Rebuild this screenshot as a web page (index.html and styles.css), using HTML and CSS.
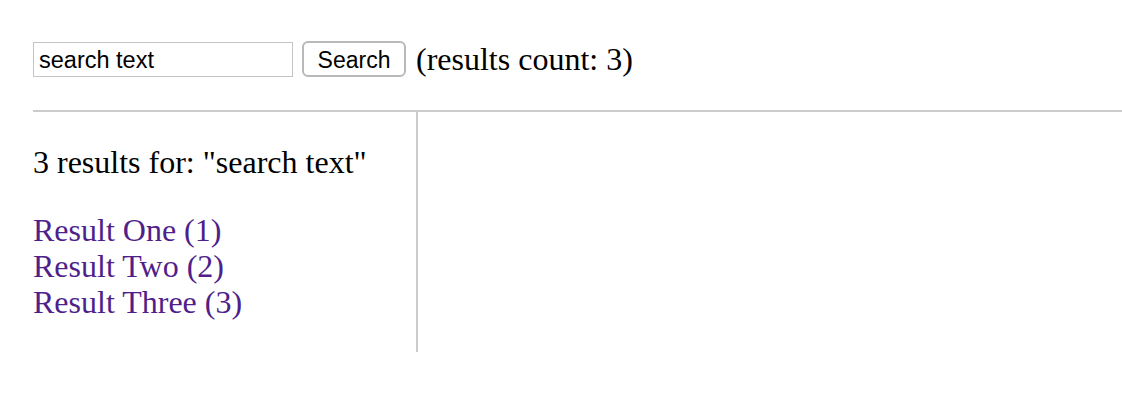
FILE: index.html
```html
<!DOCTYPE html>
<html>
<head>
<meta charset="utf-8">
<link rel="stylesheet" href="styles.css">
</head>
<body>
<div class="page">
  <form class="search-bar">
    <input class="search-input" type="text" value="search text">
    <button class="search-btn" type="button">Search</button>
    <span class="count">(results count: 3)</span>
  </form>
  <div class="divider"></div>
  <div class="main">
    <div class="results">
      <p class="summary">3 results for: "search text"</p>
      <ul class="list">
        <li><a href="#" class="link">Result One (1)</a></li>
        <li><a href="#" class="link">Result Two (2)</a></li>
        <li><a href="#" class="link">Result Three (3)</a></li>
      </ul>
    </div>
    <div class="detail"></div>
  </div>
</div>
</body>
</html>
```
FILE: styles.css
```css
html, body {
  margin: 0;
  padding: 0;
  background: #fff;
}
.page {
  padding: 41px 0 0 33px;
  font-family: "Liberation Serif", "Times New Roman", serif;
  font-size: 32px;
  color: #000;
}
.search-bar {
  display: flex;
  align-items: center;
  height: 36px;
  margin: 0;
}
.search-input {
  box-sizing: border-box;
  width: 260px;
  height: 35px;
  border: 1px solid #c4c4c4;
  padding: 2px 5px 0 5px;
  font-family: "Liberation Sans", Arial, sans-serif;
  font-size: 23.5px;
  color: #000;
  outline: none;
}
.search-btn {
  box-sizing: border-box;
  margin-left: 9px;
  width: 104px;
  height: 36px;
  border: 2px solid #b9b9b9;
  border-radius: 6px;
  background: #fff;
  font-family: "Liberation Sans", Arial, sans-serif;
  font-size: 23px;
  color: #000;
  padding: 2px 0 0 0;
}
.count {
  margin-left: 10px;
  line-height: 36px;
}
.divider {
  margin-top: 33px;
  height: 2px;
  background: #cccccc;
}
.main {
  display: flex;
}
.results {
  width: 383px;
  height: 240px;
  border-right: 2px solid #cccccc;
}
.summary {
  margin: 32px 0 0 0;
  line-height: 36px;
}
.list {
  list-style: none;
  margin: 32px 0 0 0;
  padding: 0;
}
.list li {
  line-height: 36px;
}
.link {
  color: #4f1f8b;
  text-decoration: none;
}
.detail {
  flex: 1;
}
```
